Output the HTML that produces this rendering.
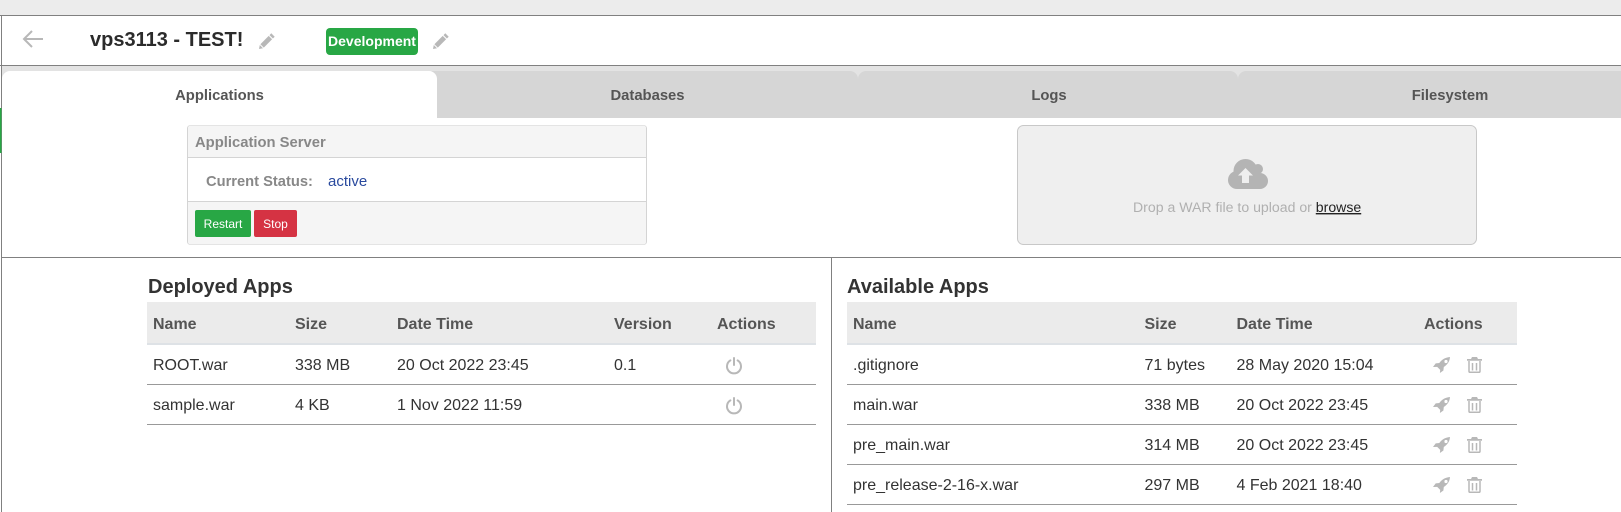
<!DOCTYPE html>
<html lang="en">
<head>
<meta charset="utf-8">
<title>vps3113 - TEST!</title>
<style>
html,body{margin:0;padding:0;background:#fff;width:1621px;height:512px;overflow:hidden}
svg{display:block}
text{font-family:"Liberation Sans",Arial,sans-serif}
.b{font-weight:700}
.th{font-size:16px;font-weight:700;fill:#555}
.td{font-size:16px;fill:#333}
.tab{font-size:14.800px;font-weight:700;fill:#555;text-anchor:middle}
.ic{fill:#b8b8b8}
</style>
</head>
<body>
<svg width="1621" height="512" viewBox="0 0 1621 512" xmlns="http://www.w3.org/2000/svg">
<defs>
<g id="pencil" fill="#b8b8b8">
<path d="M12.300.3l3.400 3.400-1.800 1.800-3.400-3.400z"/>
<path d="M9.700 2.900l3.400 3.400-8.300 8.300-3.400-3.400z"/>
<path d="M.8 12l3.200 3.200-4 .8z"/>
</g>
<g id="power" fill="none" stroke="#b8b8b8" stroke-width="2" stroke-linecap="round">
<path d="M8 1v7"/>
<path d="M4.400 3.400a7 7 0 1 0 7.200 0"/>
</g>
<g id="rocket"><path fill="#b8b8b8" fill-rule="evenodd" d="M17 0C12.500.3 8.800 2.500 6.300 6L2.700 6.400 0 10l4.200-.1 3 3L6.900 16l3.500-2.500.4-3.500C14.800 7.300 16.700 4.300 17 0zM13 2.900a1.600 1.600 0 1 1-.01 3.200A1.600 1.600 0 0 1 13 2.900z"/></g>
<g id="trash">
<path fill="#b8b8b8" d="M5 0h5l1 2h4v1.800H0V2h4z"/>
<path fill="none" stroke="#b8b8b8" stroke-width="1.500" d="M2 4v10.200c0 .6.500 1.100 1.100 1.100h8.800c.6 0 1.100-.5 1.100-1.100V4"/>
<path fill="none" stroke="#b8b8b8" stroke-width="1.500" d="M5.500 6v7.500M9.500 6v7.500"/>
</g>
</defs>

<!-- top chrome -->
<rect x="0" y="0" width="1621" height="15" fill="#ececec"/>
<rect x="0" y="15" width="1621" height="1" fill="#808080"/>
<rect x="1" y="15" width="1" height="497" fill="#808080"/>
<rect x="0" y="65" width="1621" height="1" fill="#808080"/>
<rect x="2" y="66" width="1619" height="14" fill="#e3e3e3"/>

<!-- header -->
<path d="M43 39H24.500M32 31l-8 8 8 8" fill="none" stroke="#b8b8b8" stroke-width="2"/>
<text x="90" y="46" font-size="20" class="b" fill="#2b2b2b">vps3113 - TEST!</text>
<use href="#pencil" x="259" y="33"/>
<rect x="326" y="28" width="92" height="27" rx="4" fill="#28a745"/>
<text x="372" y="46" font-size="14" class="b" fill="#fff" text-anchor="middle">Development</text>
<use href="#pencil" x="433" y="33"/>

<!-- tabs -->
<path d="M425 118V79a8 8 0 0 1 8-8h417a8 8 0 0 1 8 8v39z" fill="#d6d6d6"/>
<path d="M858 118V79a8 8 0 0 1 8-8h364a8 8 0 0 1 8 8v39z" fill="#d6d6d6"/>
<path d="M1238 118V79a8 8 0 0 1 8-8h375v47z" fill="#d6d6d6"/>
<path d="M2 118V79a8 8 0 0 1 8-8h419a8 8 0 0 1 8 8v39z" fill="#fff"/>
<text x="219.500" y="100" class="tab">Applications</text>
<text x="647.500" y="100" class="tab">Databases</text>
<text x="1049" y="100" class="tab">Logs</text>
<text x="1450" y="100" class="tab">Filesystem</text>
<rect x="0" y="108" width="1.500" height="45" fill="#28a745"/>

<!-- server panel -->
<rect x="187.500" y="125.500" width="459" height="119" rx="3" fill="#fff" stroke="#d4d4d4"/>
<path d="M188 157V128a2.500 2.500 0 0 1 2.500-2.500h453a2.500 2.500 0 0 1 2.500 2.500v29z" fill="#f5f5f5"/>
<path d="M188 201v41a2.500 2.500 0 0 0 2.500 2.500h453a2.500 2.500 0 0 0 2.500-2.500v-41z" fill="#f5f5f5"/>
<rect x="187" y="157" width="460" height="1" fill="#d4d4d4"/>
<rect x="187" y="201" width="460" height="1" fill="#d4d4d4"/>
<text x="195" y="147" font-size="14.800" class="b" fill="#888">Application Server</text>
<text x="206" y="186" font-size="14.700" class="b" fill="#888">Current Status:</text>
<text x="328" y="186" font-size="15" fill="#2a4a9e">active</text>
<rect x="195" y="210" width="56" height="27" rx="2" fill="#28a745"/>
<text x="223" y="228" font-size="12" fill="#fff" text-anchor="middle">Restart</text>
<rect x="254" y="210" width="43" height="27" rx="2" fill="#d53343"/>
<text x="275.500" y="228" font-size="12" fill="#fff" text-anchor="middle">Stop</text>

<!-- drop zone -->
<rect x="1017.500" y="125.500" width="459" height="119" rx="6" fill="#efefef" stroke="#c8c8c8"/>
<g fill="#b4b4b4">
<circle cx="1237" cy="180" r="9"/>
<circle cx="1245.500" cy="171" r="12"/>
<circle cx="1258" cy="169" r="5"/>
<circle cx="1260" cy="181" r="8"/>
<rect x="1237" y="175" width="23" height="14"/>
</g>
<path d="M1245.500 168l-7.500 7.500h4v7.500h7v-7.500h4z" fill="#efefef"/>
<text x="1133" y="212" font-size="14.100" fill="#b0b0b0">Drop a WAR file to upload or <tspan fill="#222" text-decoration="underline">browse</tspan></text>

<!-- split -->
<rect x="2" y="257" width="1619" height="1" fill="#808080"/>
<rect x="831" y="257" width="1" height="255" fill="#808080"/>

<!-- deployed -->
<text x="148" y="293" font-size="20" class="b" fill="#333">Deployed Apps</text>
<rect x="147" y="302" width="669" height="41" fill="#ebebeb"/>
<rect x="147" y="343" width="669" height="2" fill="#dee2e6"/>
<text x="153" y="329" class="th">Name</text>
<text x="295" y="329" class="th">Size</text>
<text x="397" y="329" class="th">Date Time</text>
<text x="614" y="329" class="th">Version</text>
<text x="717" y="329" class="th">Actions</text>
<text x="153" y="370" class="td">ROOT.war</text>
<text x="295" y="370" class="td">338 MB</text>
<text x="397" y="370" class="td">20 Oct 2022 23:45</text>
<text x="614" y="370" class="td">0.1</text>
<use href="#power" x="726" y="357"/>
<rect x="147" y="384" width="669" height="1" fill="#999"/>
<text x="153" y="410" class="td">sample.war</text>
<text x="295" y="410" class="td">4 KB</text>
<text x="397" y="410" class="td">1 Nov 2022 11:59</text>
<use href="#power" x="726" y="397"/>
<rect x="147" y="424" width="669" height="1" fill="#999"/>

<!-- available -->
<text x="847" y="293" font-size="20" class="b" fill="#333">Available Apps</text>
<rect x="847" y="302" width="670" height="41" fill="#ebebeb"/>
<rect x="847" y="343" width="670" height="2" fill="#dee2e6"/>
<text x="853" y="329" class="th">Name</text>
<text x="1144.500" y="329" class="th">Size</text>
<text x="1236.500" y="329" class="th">Date Time</text>
<text x="1424" y="329" class="th">Actions</text>

<text x="853" y="370" class="td">.gitignore</text>
<text x="1144.500" y="370" class="td">71 bytes</text>
<text x="1236.500" y="370" class="td">28 May 2020 15:04</text>
<use href="#rocket" x="1433" y="357"/>
<use href="#trash" x="1467" y="357"/>
<rect x="847" y="384" width="670" height="1" fill="#999"/>

<text x="853" y="410" class="td">main.war</text>
<text x="1144.500" y="410" class="td">338 MB</text>
<text x="1236.500" y="410" class="td">20 Oct 2022 23:45</text>
<use href="#rocket" x="1433" y="397"/>
<use href="#trash" x="1467" y="397"/>
<rect x="847" y="424" width="670" height="1" fill="#999"/>

<text x="853" y="450" class="td">pre_main.war</text>
<text x="1144.500" y="450" class="td">314 MB</text>
<text x="1236.500" y="450" class="td">20 Oct 2022 23:45</text>
<use href="#rocket" x="1433" y="437"/>
<use href="#trash" x="1467" y="437"/>
<rect x="847" y="464" width="670" height="1" fill="#999"/>

<text x="853" y="490" class="td">pre_release-2-16-x.war</text>
<text x="1144.500" y="490" class="td">297 MB</text>
<text x="1236.500" y="490" class="td">4 Feb 2021 18:40</text>
<use href="#rocket" x="1433" y="477"/>
<use href="#trash" x="1467" y="477"/>
<rect x="847" y="504" width="670" height="1" fill="#999"/>
</svg>
</body>
</html>
